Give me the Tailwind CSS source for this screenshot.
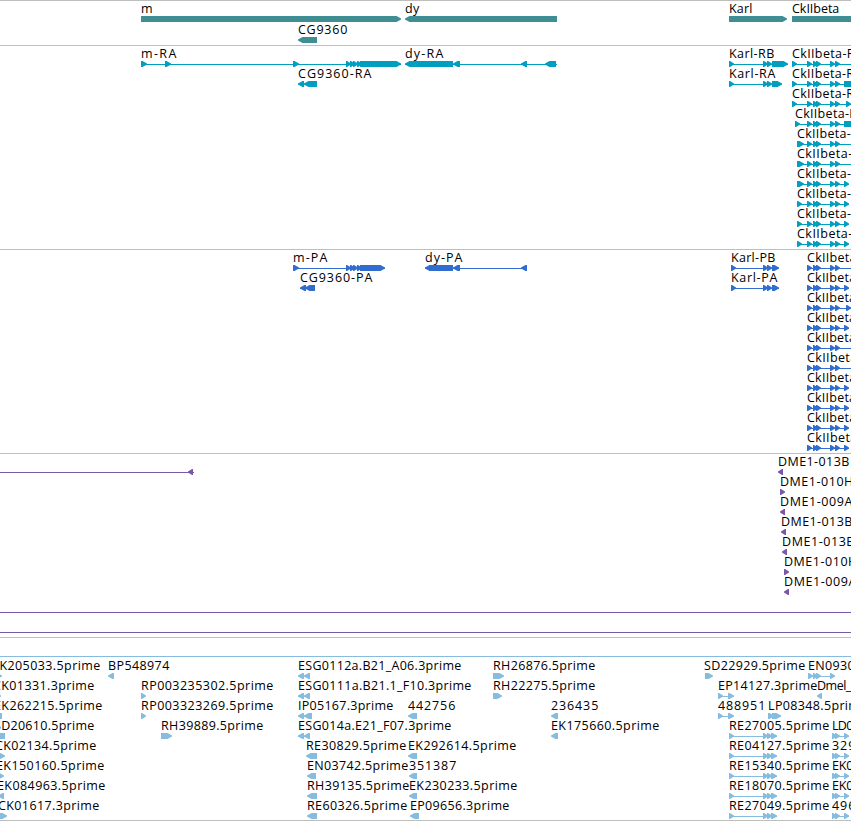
<!DOCTYPE html>
<html lang="en">
<head>
  <meta charset="UTF-8" />
  <title>Genome Browser</title>
  <meta name="viewport" content="width=device-width, initial-scale=1" />
  <script src="https://cdn.jsdelivr.net/npm/@tailwindcss/browser@4"></script>
</head>
<body class="bg-white text-black overflow-hidden">

  <!-- Tracks, one svg each; the viewBox keeps page coordinates -->
  <main class="flex flex-col w-[851px] h-[821px] border-b border-[#bebebe] font-['Open_Sans','Noto_Sans',sans-serif] text-[12.5px]">
    <section class="border-t border-[#bebebe] h-[45px]">
      <svg id="genes" class="block w-full h-full text-[#3e8e94]" viewBox="0 1 851 44"></svg>
    </section>
    <section class="border-t border-[#bebebe] h-[204px]">
      <svg id="transcripts" class="block w-full h-full text-[#009fc0]" viewBox="0 46 851 203"></svg>
    </section>
    <section class="border-t border-[#bebebe] h-[204px]">
      <svg id="proteins" class="block w-full h-full text-[#316ccf]" viewBox="0 250 851 203"></svg>
    </section>
    <section class="border-t border-[#bebebe] h-[184px]">
      <svg id="insertions" class="block w-full h-full text-[#7a58a8]" viewBox="0 454 851 183"></svg>
    </section>
    <section class="border-t border-[#bebebe] h-[183px]">
      <svg id="ests" class="block w-full h-full text-[#87bcdf]" viewBox="0 638 851 182"></svg>
    </section>
  </main>

  <script>
    const NS = "http://www.w3.org/2000/svg";

    function add(svg, tag, attrs, text) {
      const el = document.createElementNS(NS, tag);
      for (const k in attrs) el.setAttribute(k, attrs[k]);
      if (text) el.textContent = text;
      svg.appendChild(el);
    }

    function line(svg, x1, x2, y) {
      add(svg, "rect", { x: x1, y: y, width: x2 - x1, height: 1, fill: "currentColor" });
    }

    // exon box with an arrow head on one side
    function exon(svg, x1, x2, top, dir) {
      const head = Math.min(x2 - x1, 5.5), mid = top + 3, bot = top + 6;
      const pts = dir === ">"
        ? [[x1, top], [x2 - head, top], [x2 - head + 1, top], [x2, mid - 0.4], [x2, mid + 0.4], [x2 - head + 1, bot], [x1, bot]]
        : [[x2, top], [x1 + head, top], [x1 + head - 1, top], [x1, mid - 0.4], [x1, mid + 0.4], [x1 + head - 1, bot], [x2, bot]];
      add(svg, "polygon", { points: pts.map(p => p.join(",")).join(" "), fill: "currentColor" });
    }

    // feature: [label, x, label width, baseline, direction, [[x1, x2], ...], line end]
    function draw(id, features) {
      const svg = document.getElementById(id);
      for (const [label, x, w, y, dir, exons, end] of features) {
        if (exons.length > 1 || end) {
          line(svg, exons[0][0], end || exons[exons.length - 1][1], y + 6);
        }
        exons.forEach(e => exon(svg, e[0], e[1], y + 3, dir));
        if (label) add(svg, "text", { x: x, y: y, textLength: w - 0.7, fill: "#000" }, label);
      }
    }

    draw("genes", [
      ["m", 141, 12, 13, ">", [[141, 401]]],
      ["dy", 405, 15, 13, "<", [[405, 557]]],
      ["CG9360", 298, 50, 34, "<", [[298, 317]]],
      ["Karl", 729, 24, 13, ">", [[729, 787]]],
      ["CkIIbeta", 792, 48, 13, ">", [[792, 870]]],
    ]);

    const ck = [[807, 812], [813, 818], [816, 821], [830, 835], [835, 840]];
    draw("transcripts", [
      ["m-RA", 141, 36, 58, ">", [[141, 147], [165, 171], [293, 299], [346, 351], [350, 355], [353, 358], [357, 362], [360, 401]]],
      ["dy-RA", 405, 39, 58, "<", [[405, 453], [453, 460], [521, 527], [545, 556]], 557],
      ["CG9360-RA", 298, 74, 78, "<", [[298, 304], [304, 317]]],
      ["Karl-RB", 729, 46, 58, ">", [[729, 734], [763, 768], [767, 772], [772, 788]]],
      ["Karl-RA", 729, 47, 78, ">", [[729, 734], [763, 768], [767, 772], [772, 782]]],
      ["CkIIbeta-RF", 792, 70, 58, ">", [[792, 797], ...ck], 851],
      ["CkIIbeta-RE", 792, 70, 78, ">", [[792, 797], ...ck, [844, 870]]],
      ["CkIIbeta-RG", 792, 72, 98, ">", [[792, 797], ...ck, [846, 851]]],
      ["CkIIbeta-RD", 795, 72, 118, ">", [[795, 800], ...ck, [844, 870]]],
      ["CkIIbeta-RH", 797, 72, 138, ">", [[797, 804], ...ck], 851],
      ["CkIIbeta-RI", 797, 68, 158, ">", [[797, 804], ...ck], 851],
      ["CkIIbeta-RA", 797, 71, 178, ">", [[797, 804], ...ck, [844, 849]]],
      ["CkIIbeta-RB", 797, 71, 198, ">", [[797, 802], ...ck, [844, 849]]],
      ["CkIIbeta-RC", 797, 71, 218, ">", [[797, 802], ...ck, [844, 849]]],
      ["CkIIbeta-RJ", 797, 68, 238, ">", [[797, 802], ...ck, [844, 849]]],
    ]);

    draw("proteins", [
      ["m-PA", 293, 35, 262, ">", [[293, 299], [346, 351], [350, 355], [353, 358], [357, 362], [360, 385]]],
      ["dy-PA", 425, 38, 262, "<", [[425, 453], [453, 460], [521, 527]]],
      ["CG9360-PA", 300, 73, 282, "<", [[300, 306], [305, 315]]],
      ["Karl-PB", 731, 45, 262, ">", [[731, 736], [763, 768], [767, 772], [772, 779]]],
      ["Karl-PA", 731, 47, 282, ">", [[731, 736], [763, 768], [767, 772], [772, 779]]],
      ["CkIIbeta-PF", 807, 69, 262, ">", ck, 851],
      ["CkIIbeta-PE", 807, 69, 282, ">", [...ck, [844, 849]]],
      ["CkIIbeta-PG", 807, 71, 302, ">", [...ck, [846, 851]]],
      ["CkIIbeta-PD", 807, 71, 322, ">", [...ck, [844, 849]]],
      ["CkIIbeta-PH", 807, 71, 342, ">", ck, 851],
      ["CkIIbeta-PI", 807, 67, 362, ">", ck, 851],
      ["CkIIbeta-PA", 807, 70, 382, ">", [...ck, [844, 849]]],
      ["CkIIbeta-PB", 807, 70, 402, ">", [...ck, [844, 849]]],
      ["CkIIbeta-PC", 807, 70, 422, ">", [...ck, [844, 849]]],
      ["CkIIbeta-PJ", 807, 67, 442, ">", [...ck, [844, 849]]],
    ]);

    draw("insertions", [
      ["", 0, 0, 466, "<", [[188, 193]], 194],
      ["DME1-013B", 778, 72, 466, "<", [[778, 783]]],
      ["DME1-010H", 780, 74, 486, ">", [[780, 785]]],
      ["DME1-009A", 780, 73, 506, "<", [[780, 785]]],
      ["DME1-013B", 781, 72, 526, "<", [[781, 786]]],
      ["DME1-013E", 782, 72, 546, "<", [[782, 787]]],
      ["DME1-010H", 784, 74, 566, ">", [[784, 789]]],
      ["DME1-009A", 784, 73, 586, "<", [[784, 789]]],
    ]);
    const insertions = document.getElementById("insertions");
    line(insertions, 0, 188, 472);
    line(insertions, 0, 851, 612);
    line(insertions, 0, 851, 632);

    const re = [[729, 734], [763, 768], [767, 772], [771, 777]];
    const ld = [[832, 837], [835, 840], [844, 849]];
    draw("ests", [
      ["EK205033.5prime", -8, 109, 670, ">", [[-4, 2]]],
      ["CK01331.3prime", -7, 102, 690, ">", [[-5, 1]]],
      ["EK262215.5prime", -6, 109, 710, "<", [[-6, 2]]],
      ["SD20610.5prime", -6, 101, 730, "<", [[-6, 5]]],
      ["CK02134.5prime", -5, 102, 750, ">", [[-5, 5]]],
      ["EK150160.5prime", -4, 109, 770, ">", [[-4, 4]]],
      ["EK084963.5prime", -3, 109, 790, "<", [[-2, 4]]],
      ["CK01617.3prime", -2, 102, 810, ">", [[-2, 7]]],

      ["BP548974", 108, 62, 670, "<", [[108, 114]]],
      ["RP003235302.5prime", 141, 133, 690, ">", [[141, 146]]],
      ["RP003323269.5prime", 141, 133, 710, ">", [[141, 146]]],
      ["RH39889.5prime", 161, 103, 730, ">", [[161, 172]]],

      ["ESG0112a.B21_A06.3prime", 298, 164, 670, "<", [[298, 304], [304, 310]]],
      ["ESG0111a.B21.1_F10.3prime", 298, 174, 690, "<", [[298, 304], [304, 310]]],
      ["IP05167.3prime", 298, 96, 710, "<", [[298, 304], [304, 312]]],
      ["ESG014a.E21_F07.3prime", 298, 154, 730, "<", [[298, 304], [304, 310]]],
      ["RE30829.5prime", 306, 101, 750, "<", [[306, 317]]],
      ["EN03742.5prime", 307, 102, 770, "<", [[307, 316]]],
      ["RH39135.5prime", 307, 103, 790, "<", [[307, 317]]],
      ["RE60326.5prime", 307, 101, 810, "<", [[307, 317]]],
      ["442756", 408, 48, 710, "<", [[408, 417]]],
      ["EK292614.5prime", 408, 109, 750, "<", [[408, 417]]],
      ["351387", 409, 48, 770, "<", [[409, 417]]],
      ["EK230233.5prime", 409, 109, 790, "<", [[409, 417]]],
      ["EP09656.3prime", 410, 100, 810, "<", [[410, 419]]],

      ["RH26876.5prime", 493, 103, 670, ">", [[493, 504]]],
      ["RH22275.5prime", 493, 103, 690, ">", [[493, 502]]],
      ["236435", 551, 48, 710, "<", [[551, 558]]],
      ["EK175660.5prime", 551, 109, 730, "<", [[551, 558]]],

      ["SD22929.5prime", 704, 102, 670, ">", [[705, 713]]],
      ["EN09306.5prime", 808, 102, 670, ">", [[808, 813], [813, 818], [816, 821], [830, 835]]],
      ["EP14127.3prime", 718, 100, 690, ">", [[718, 723], [728, 734]]],
      ["Dmel_", 817, 35, 690, "<", [[817, 822]]],
      ["488951", 718, 48, 710, ">", [[718, 723], [728, 734]]],
      ["LP08348.5prime", 768, 100, 710, ">", [[768, 774], [772, 781]]],
      ["RE27005.5prime", 729, 101, 730, ">", re],
      ["RE04127.5prime", 729, 101, 750, ">", re],
      ["RE15340.5prime", 729, 101, 770, ">", re],
      ["RE18070.5prime", 729, 101, 790, ">", re],
      ["RE27049.5prime", 729, 101, 810, ">", re],
      ["LD0", 832, 22, 730, ">", ld],
      ["329", 832, 24, 750, ">", ld],
      ["EK0", 832, 22, 770, ">", ld],
      ["EK0", 832, 22, 790, ">", ld],
      ["496", 832, 24, 810, ">", ld],
    ]);
    line(document.getElementById("ests"), 0, 851, 656);
  </script>
</body>
</html>
